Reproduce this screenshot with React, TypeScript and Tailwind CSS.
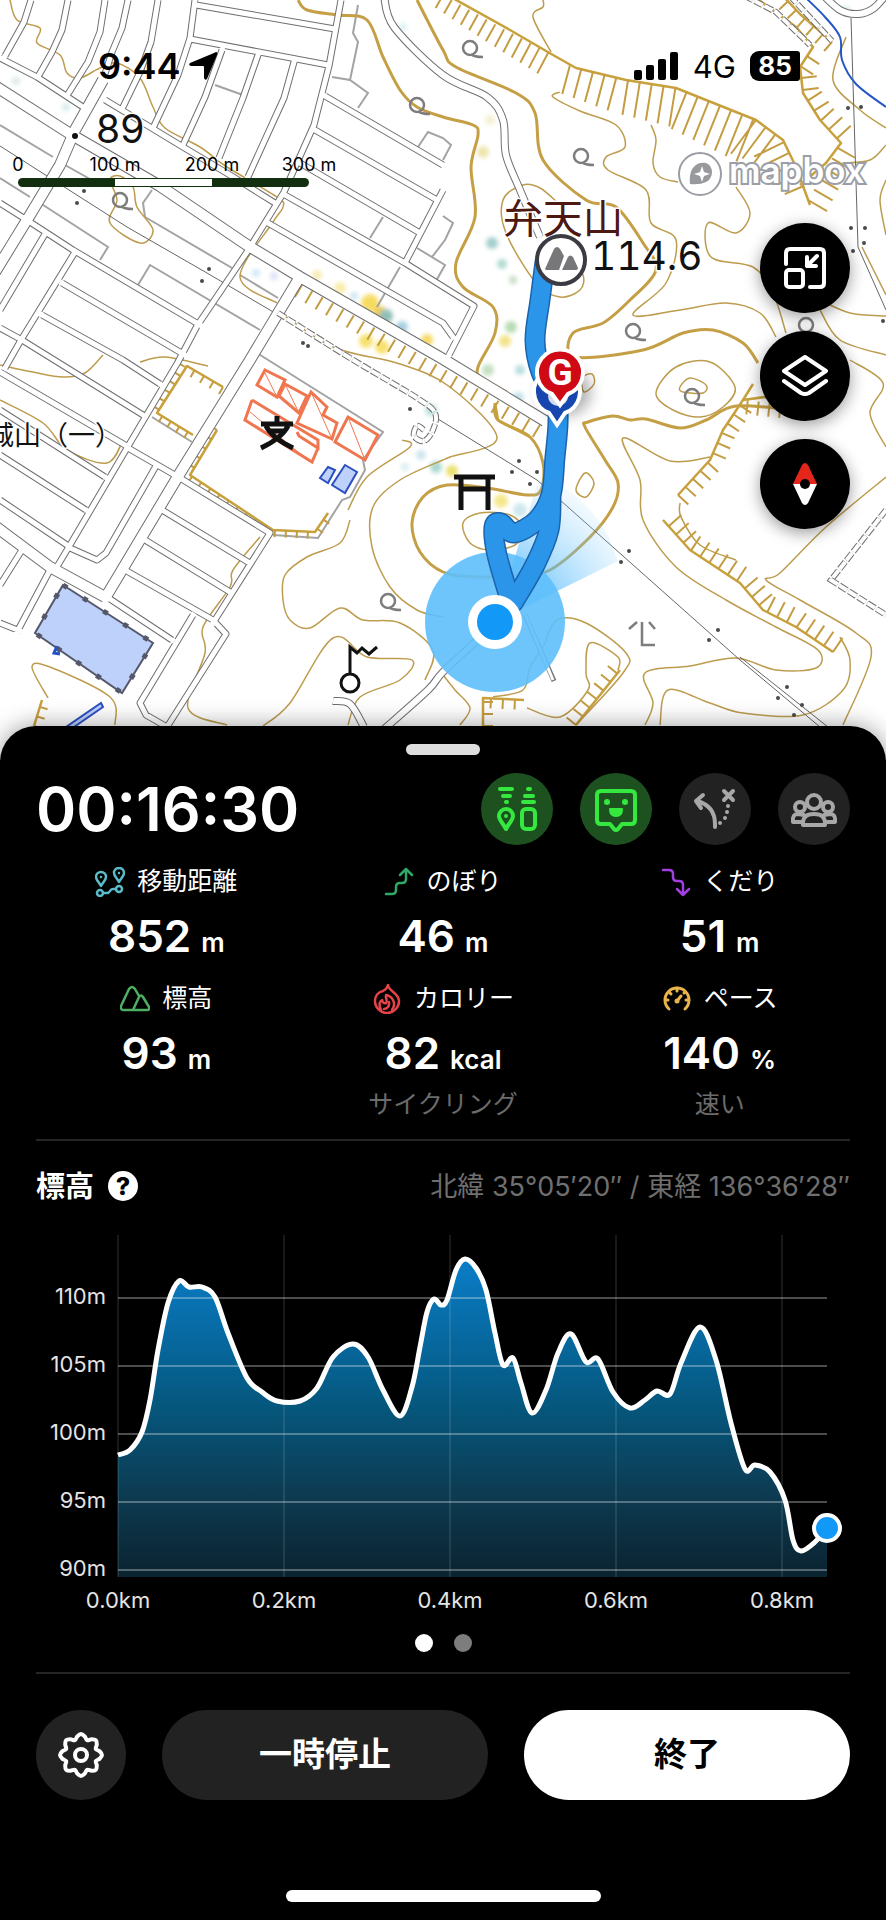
import type { ReactNode } from 'react';

type Point = [number, number];

function parse(points: string): Point[] {
  return points.split(' ').map((p) => p.split(',').map(Number) as Point);
}

// Catmull-Rom spline through the given points
function curve(points: string, closed = false) {
  const pts = parse(points);
  const n = pts.length;
  const at = (i: number) =>
    closed ? pts[(i + n) % n] : pts[Math.max(0, Math.min(n - 1, i))];
  let d = `M${pts[0][0]} ${pts[0][1]}`;
  for (let i = 0; i < (closed ? n : n - 1); i++) {
    const [p0, p1, p2, p3] = [at(i - 1), at(i), at(i + 1), at(i + 2)];
    d += `C${p1[0] + (p2[0] - p0[0]) / 6} ${p1[1] + (p2[1] - p0[1]) / 6} ${
      p2[0] - (p3[0] - p1[0]) / 6
    } ${p2[1] - (p3[1] - p1[1]) / 6} ${p2[0]} ${p2[1]}`;
  }
  return d;
}

// Cliff hachures: short strokes at right angles to the line
function ticks(points: string, length: number, gap = 10, endLength = length) {
  const pts = parse(points);
  const total = pts
    .slice(1)
    .reduce((s, p, i) => s + Math.hypot(p[0] - pts[i][0], p[1] - pts[i][1]), 0);
  let d = '';
  let walked = 0;
  let next = 0;
  for (let i = 0; i < pts.length - 1; i++) {
    const [x1, y1] = pts[i];
    const [x2, y2] = pts[i + 1];
    const seg = Math.hypot(x2 - x1, y2 - y1);
    const dx = (x2 - x1) / seg;
    const dy = (y2 - y1) / seg;
    while (next <= walked + seg) {
      const t = next - walked;
      const l = length + ((endLength - length) * next) / total;
      d += `M${x1 + dx * t} ${y1 + dy * t}l${-dy * l} ${dx * l}`;
      next += gap;
    }
    walked += seg;
  }
  return d;
}

const line = (points: string) => 'M' + points.replaceAll(' ', 'L');

const narrowRoads = [
  '31,0 24,22 5,56',
  '68,0 62,30 52,52 39,75',
  '105,0 100,32 88,62 68,94',
  '128,0 122,28 112,52 103,80',
  '158,0 151,42 140,72 123,107',
  '195,0 190,38 178,75 154,126',
  '222,50 205,97 183,145',
  '258,55 243,98 219,158',
  '294,62 284,98 248,177',
  '341,0 329,66 314,125 284,192 247,252 197,326 178,362 127,448 70,545 58,565',
  '196,5 335,29',
  '190,39 328,65',
  '0,58 37,77 83,107',
  '105,100 150,127 183,147 230,175 275,203',
  '0,203 30,222 73,250 200,325',
  '62,283 185,355',
  '42,315 123,360 160,384',
  '75,252 21,340 5,368',
  '45,234 0,310',
  '0,328 22,340 143,415',
  '0,372 125,445',
  '0,410 105,477',
  '0,455 86,510',
  '0,500 67,545',
  '50,570 17,632',
  '22,550 0,585',
  '0,623 20,631',
  '107,597 172,640',
  '128,448 180,478 270,533 213,623',
  '162,510 248,562',
  '145,540 230,592',
  '125,570 213,620 226,634 167,727 146,715 140,703 193,615',
  '156,466 106,553 97,560 70,548',
  '325,96 443,165',
  '315,130 437,200',
  '300,163 420,233',
  '285,195 405,263 474,306 449,355',
  '268,223 443,323 453,337',
  '443,190 405,263',
];

const wideRoads = [
  '103,80 75,130 60,165 30,215 -5,272',
  '-5,86 72,135 160,186 247,245 300,277 443,359 545,421',
  '298,280 250,360 180,473 107,595',
  '-5,526 50,567 105,597',
];

const curvedRoads = [
  '384,-4 394,27 443,75 487,97 503,120 506,155 520,190 540,237',
  '482,636 443,672 428,690 383,730',
  '333,701 350,704 364,727',
  '820,-8 840,10 858,14 874,8 890,-10',
];

const greyLines = [
  '0,125 53,157',
  '65,165 97,183',
  '0,178 30,197',
  '40,203 108,247 100,260',
  '138,285 150,265 260,330',
  '152,190 143,203 145,217 232,268',
  '358,5 353,33 358,42 350,80',
  '332,77 350,80 368,93 358,108',
  '418,147 428,132 443,138 451,145 443,160',
  '215,85 243,95',
  '383,217 370,238',
  '400,267 377,307',
  '417,248 445,265 436,281',
  '443,216 453,223 445,240 432,257',
  '240,275 278,298',
  '257,353 383,432 363,460 365,470 350,497 342,500 318,538 273,535',
  '152,417 192,442',
];

const thickContours = [
  '298,0 307,10 337,15 367,20 383,57 400,90 417,107 443,117 473,125 478,135 471,167 475,217 456,263 463,287 493,307 495,333 478,367 482,378 507,392',
  '495,403 498,420 530,437 543,463 541,490 527,495 487,488 447,485 423,497 412,523 420,552 443,572 476,577 520,575 550,570 590,537 613,507 618,483 605,460 585,427 588,422 613,416 630,420 646,419 680,428 706,420 736,406 793,410',
  '417,0 443,50 456,67 516,93 535,113 543,160 586,200 616,207 643,243 656,270 630,300 603,323 573,333 575,357 643,350 683,333 713,330 743,343 758,363',
];

const thinContours = [
  '543,0 543,7 533,17 551,52',
  '560,92 553,97 580,111 616,125 625,147 606,157 608,170 646,190 651,223 676,240 666,283 633,315 680,310 726,303 760,313 776,337',
  '651,125 656,140 653,163 660,177 678,182',
  '736,187 750,213 736,233 708,223 711,257 753,267 773,293 786,333',
  '558,203 540,188 523,185 503,200 506,233 536,283 560,297 580,290 583,275 570,262',
  '645,725 653,703 645,673 690,666 736,658 776,670 816,668 818,650 776,627 726,600 676,567 643,520 640,480 623,438 670,461 710,457',
  '660,725 668,690 710,703 743,713 803,715 843,690 850,660 840,637',
  '886,477 826,527 780,573 766,580 800,600 856,633 871,657 843,725',
  '850,360 883,383 870,413 886,447',
  '680,503 681,517 700,545 736,560',
  '820,300 850,313 886,316',
  '820,310 840,340 886,355',
  '843,163 870,160 886,145',
  '576,725 623,673 626,653 586,623 557,620 543,647 530,667 523,690 493,697',
  '618,670 618,657 590,643 586,673 588,690 560,717 527,708',
  '443,460 400,480 373,507 372,547 390,587 417,610 443,617',
  '277,310 333,347 400,364 450,387 497,438 450,457 443,460',
  '402,440 410,447 367,477 348,510',
  '350,520 340,543 307,557 285,575 283,600 290,620 310,628 340,608 363,620 400,623 433,650 425,680',
  '263,726 290,703 333,638 367,657 412,660 400,680 360,697 348,725',
  '48,698 32,667 50,667 110,697 115,725',
  '0,400 43,423 67,450 107,463 123,440',
  '260,537 233,570 230,587 203,627 205,653 188,708 227,725',
  '0,365 33,372 63,377 85,373 103,355',
  '140,362 165,357 208,366',
  '10,0 17,20 40,28 37,43 60,55 67,73 80,78 100,68 117,63 140,78 153,107 165,128 200,147 227,167 277,197 283,207 273,222 240,277 277,303',
  '443,675 455,690 470,708 460,725',
  '846,37 833,80 860,110 886,128',
  '862,247 886,295',
  '886,180 880,200 886,235',
];

const rings = [
  '656,393 676,367 710,362 735,387 723,407 700,417 673,410',
  '680,387 690,378 706,385 703,393 683,392',
  '585,473 594,483 586,497 576,490',
  '110,180 117,200 110,223 140,243 153,230 137,207 133,187 120,176',
  '463,523 480,513 510,515 525,530 515,545 490,550 470,543',
  '582,378 592,374 594,384 584,392',
];

const cliffEdges = [
  '449,-4 510,30 553,55 576,68 626,80 676,88 756,120 783,140 796,167 810,205',
  '756,-2 796,27 813,47 800,67 803,93 820,120 841,143 826,163 800,185',
  '783,-4 800,14 832,42',
  '753,384 743,400 723,430 710,460 678,495',
  '743,400 765,397 790,405',
  '663,520 690,550 740,583 763,610 796,627 833,652',
  '620,670 576,725',
  '223,387 187,366 157,413 193,435',
  '217,430 190,475 273,530 315,532 328,513',
  '524,700 483,698 483,726',
  '495,403 498,420 530,437',
  '42,700 34,726',
];

const hachures = [
  ticks('443,-5 500,27 553,55', 15, 10, 24),
  ticks('570,65 626,80 676,88 756,120', 30, 12, 46),
  ticks('756,120 783,140 796,167 806,190', 42, 12, 20),
  ticks('808,200 841,143 820,120 803,93 800,67 813,47', 22, 12, 14),
  ticks('832,42 800,14 783,-4', -12, 12),
  ticks('678,495 710,460 723,430 743,400 790,405', 14, 11),
  ticks('833,652 796,627 763,610 740,583 690,550 663,520', 17, 11),
  ticks('576,725 620,670', -12, 11),
  ticks('223,387 187,366', -8, 11),
  ticks('185,367 157,413 193,435', 7, 10),
  ticks('217,430 190,475 273,530 315,532 328,513', 7, 11),
  ticks('302,285 545,428', 14, 12),
  ticks('483,726 483,698 524,700', 10, 12),
  ticks('34,726 42,700', 8, 10),
];

const shrubs: Point[] = [
  [417, 105],
  [120, 200],
  [470, 48],
  [581, 156],
  [633, 331],
  [806, 325],
  [692, 396],
  [388, 601],
];

const pylons: Point[] = [
  [84, 191], [77, 203], [209, 269], [202, 281], [303, 343], [308, 346],
  [519, 461], [512, 472], [537, 472], [530, 484], [629, 551], [621, 562],
  [718, 630], [709, 640], [787, 687], [778, 698], [802, 705], [794, 715],
  [851, 228], [865, 228], [864, 243], [853, 251], [883, 321], [848, 108],
  [861, 107], [410, 409],
];

// x, y, radius, colour of the heat spots of other walkers
const spots: [number, number, number, string][] = [
  [370, 303, 9, '#f5d33c'],
  [380, 313, 7, '#e8c030'],
  [386, 316, 7, '#76b0a6'],
  [402, 327, 6, '#8fc4dc'],
  [366, 341, 7, '#f5d94a'],
  [382, 347, 7, '#f5d94a'],
  [427, 340, 6, '#f3cf40'],
  [340, 288, 6, '#f8e89a'],
  [317, 275, 5, '#f3e7a0'],
  [354, 296, 4, '#bfe0ee'],
  [256, 273, 4, '#c4e2f4'],
  [274, 276, 4, '#d4d8f4'],
  [16, 81, 4, '#d3e6e3'],
  [66, 107, 4, '#cfe5ea'],
  [492, 243, 6, '#8dc3c0'],
  [502, 264, 5, '#9fd0c4'],
  [513, 280, 4, '#b9d6b4'],
  [511, 327, 6, '#a5d2a0'],
  [505, 341, 6, '#f0dc6a'],
  [483, 152, 6, '#ecdf9a'],
  [490, 120, 5, '#f2edc6'],
  [488, 370, 6, '#b5d8b0'],
  [520, 370, 5, '#a8d4d8'],
  [518, 398, 6, '#b2dbe4'],
  [436, 467, 6, '#94cdc2'],
  [421, 455, 5, '#c2dfe8'],
  [405, 467, 4, '#d2e8ee'],
  [452, 471, 6, '#e6d84c'],
  [501, 501, 7, '#f2e270'],
  [520, 510, 7, '#c3e3ea'],
  [431, 410, 6, '#a9d8d6'],
  [846, 10, 4, '#cdeaf2'],
  [403, 27, 4, '#d5ecf2'],
];

const route =
  curve('545,262 540,300 535,340 541,372 556,400 558,423 555,457 551,495 537,520 514,533 501,523 494,527 497,555 511,603') +
  curve('551,495 549,530 535,565 513,603');

const dashedRoads =
  curve('278,313 350,358 417,398 435,413 433,430 424,441 414,436 417,426 424,430') +
  'M886 510L831 580L886 615M745 -4L776 12L810 45M790 -4L832 41';

const sans = "Inter, 'Noto Sans CJK JP', sans-serif";

function GsiMap() {
  return (
    <svg
      viewBox="0 0 886 760"
      preserveAspectRatio="xMidYMin slice"
      className="block h-[760px] w-full bg-white"
      fill="none"
      role="img"
      aria-label="地図"
    >
      <defs>
        <filter id="soft">
          <feGaussianBlur stdDeviation="2" />
        </filter>
        <filter id="shadow" x="-50%" y="-50%" width="200%" height="200%">
          <feGaussianBlur stdDeviation="7" />
        </filter>
        <radialGradient id="cone" gradientUnits="userSpaceOnUse" cx="495" cy="622" r="150">
          <stop offset="0.3" stopColor="#45b4fb" stopOpacity="0.75" />
          <stop offset="1" stopColor="#8bd0fb" stopOpacity="0.1" />
        </radialGradient>
      </defs>

      <g filter="url(#soft)" opacity="0.8">
        {spots.map(([x, y, r, fill]) => (
          <circle key={`${x}-${y}`} cx={x} cy={y} r={r} fill={fill} />
        ))}
      </g>

      <path d={greyLines.map(line).join('')} stroke="#a3a3a3" strokeWidth="2" />
      <path d={thinContours.map((c) => curve(c)).join('')} stroke="#bd9c4e" strokeWidth="1.5" />
      <path d={rings.map((c) => curve(c, true)).join('')} stroke="#bd9c4e" strokeWidth="1.5" />
      <path d={thickContours.map((c) => curve(c)).join('')} stroke="#c59f45" strokeWidth="3" />
      <path d={cliffEdges.map(line).join('')} stroke="#c8a03c" strokeWidth="2.5" strokeLinejoin="round" />
      <path d={hachures.join('')} stroke="#c49c42" strokeWidth="2" />

      <path
        d="M0 146L127 227L207 273L275 313M438 419L537 480L560 500L740 660L820 727M740 657L828 727M851 18L858 247L886 310"
        stroke="#666"
        strokeWidth="1"
      />

      {/* roads: casing first, then the white fill */}
      <g strokeLinejoin="round">
        <path d={narrowRoads.map(line).join('')} stroke="#6f6f6f" strokeWidth="7" />
        <path d={curvedRoads.map((c) => curve(c)).join('')} stroke="#6f6f6f" strokeWidth="8" />
        <path d={wideRoads.map(line).join('')} stroke="#6f6f6f" strokeWidth="12" />
        <path d={narrowRoads.map(line).join('')} stroke="#fff" strokeWidth="5" strokeLinecap="square" />
        <path d={curvedRoads.map((c) => curve(c)).join('')} stroke="#fff" strokeWidth="6" />
        <path d={wideRoads.map(line).join('')} stroke="#fff" strokeWidth="10" strokeLinecap="square" />
        <path d="M525 615L554 681" stroke="#777" strokeWidth="5" />
        <path d="M525 614L553 680" stroke="#fff" strokeWidth="3" />
      </g>
      <g strokeDasharray="9 2">
        <path d={dashedRoads} stroke="#6f6f6f" strokeWidth="6" />
        <path d={dashedRoads} stroke="#fff" strokeWidth="4" />
      </g>

      <path d={curve('806,-2 825,17 840,37 842,60 856,84 886,107')} stroke="#2456c8" strokeWidth="2" />

      {/* school and pool */}
      <g stroke="#f0764f" strokeWidth="3">
        <path d="M265 370L285 380L277 397L257 385ZM285 384L307 396L299 413L279 396ZM311 392L327 407L323 415L337 423L332 439L297 423ZM348 417L378 435L365 460L335 442ZM252 400L318 440L318 448L299 436L297 432M252 400L245 420L312 462L318 448" />
        <path d="M265 373L277 397M250 412L310 462M348 417L365 460M311 392L332 439M285 384L299 413" strokeWidth="1" />
      </g>
      <g fill="#bdd1fb" stroke="#2c50c4" strokeWidth="2">
        <path d="M328 467L335 470L328 483L320 478ZM345 465L357 472L345 493L332 485ZM101 703L103 707L74 727H66Z" />
        <path d="M63 585L153 643L122 693L35 633Z" stroke="#55586a" />
      </g>
      <path d="M63 585L153 643L122 693L35 633Z" stroke="#55586a" strokeWidth="5" strokeDasharray="5 19" />
      <path d="M57 646L54 653L60 654" stroke="#2450c8" strokeWidth="3" />

      {/* map symbols */}
      <g stroke="#111" strokeWidth="5">
        <path d="M277 416V424M261 424H293M266 426Q272 438 293 448M288 426Q282 438 261 448M268 431H286" />
        <path d="M454 477H495M461 478V510M488 478V510M461 489H488" />
        <circle cx="350" cy="683" r="9" strokeWidth="3" />
        <path d="M350 674V647L357 653L362 648L369 654L377 647" strokeWidth="3" />
      </g>
      <g stroke="#7d7d7d" strokeWidth="2.5">
        <path d="M629 629L637 622M649 622L655 629M642 622V645H655" />
        {shrubs.map(([x, y]) => (
          <path
            key={`${x}-${y}`}
            d={`M${x - 7} ${y}a7 7 0 1 0 14 0a7 7 0 1 0 -14 0M${x + 1} ${y + 6}Q${x + 4} ${y + 9} ${x + 13} ${y + 9}`}
          />
        ))}
      </g>
      {pylons.map(([x, y]) => (
        <circle key={`${x}-${y}`} cx={x} cy={y} r="2" fill="#4a4a4a" />
      ))}

      {/* walked route and current position */}
      <path d="M495 622L540 475Q600 500 618 561Z" fill="url(#cone)" />
      <circle cx="495" cy="622" r="70" fill="#5ebffb" opacity="0.9" />
      <path d={route} stroke="#1c63ab" strokeWidth="21" strokeLinejoin="round" strokeLinecap="round" />
      <path d={route} stroke="#2b95ea" strokeWidth="18" strokeLinejoin="round" strokeLinecap="round" />
      <circle cx="495" cy="622" r="27" fill="#fff" />
      <circle cx="495" cy="622" r="18" fill="#1299f7" />

      {/* start and goal pins */}
      <ellipse cx="565" cy="392" rx="26" ry="24" fill="#000" opacity="0.3" filter="url(#shadow)" />
      <path d="M557 425L549 413A23 23 0 1 1 565 413Z" fill="#1747ae" stroke="#fff" strokeWidth="4" />
      <circle cx="558" cy="396" r="10" fill="#d5dcee" />
      <path d="M560 405L552 394A23 23 0 1 1 568 394Z" fill="#cf0a15" stroke="#fff" strokeWidth="4" />
      <text x="560" y="385" textAnchor="middle" fill="#fff" fontFamily="Roboto, sans-serif" fontSize="37" fontWeight="700">
        G
      </text>

      {/* summit */}
      <g stroke="#fff" strokeWidth="3" paintOrder="stroke" fontFamily={sans}>
        <text x="503" y="233" fill="#4d1712" fontSize="40">
          弁天山
        </text>
        <text x="591" y="270" fill="#111" fontSize="39" className="tabular-nums">
          114.6
        </text>
        <text x="96" y="143" fill="#111" fontSize="39">
          89
        </text>
        <text x="-13" y="445" fill="#111" fontSize="27">
          城山（一）
        </text>
      </g>
      <circle cx="75" cy="136" r="3" fill="#111" />
      <circle cx="561" cy="260" r="24" fill="#fff" stroke="#3b3b43" strokeWidth="4" />
      <path
        d="M545 269L554 249Q557 245 560 249L564 256L559 270H546ZM562 270L568 257Q570 254 573 257L578 268Q578 270 576 270Z"
        fill="#77777a"
      />

      {/* map provider mark */}
      <circle cx="700" cy="174" r="21" fill="#fff" fillOpacity="0.8" stroke="#9a9da3" strokeWidth="2" />
      <path d="M690 184C688 168 697 161 706 163C714 166 714 178 706 182Q700 185 690 184Z" fill="#97999c" />
      <path d="M702 166L704 172L710 174L704 176L702 182L700 176L694 174L700 172Z" fill="#fff" />
      <text x="729" y="183" fill="#fff" stroke="#9b9ea6" strokeWidth="4" paintOrder="stroke" fontFamily={sans} fontSize="35" fontWeight="600">
        mapbox
      </text>
    </svg>
  );
}

function StatusBar() {
  return (
    <div className="absolute inset-x-0 top-11 flex h-11 items-center justify-between pl-[98px] pr-[86px] text-black">
      <div className="flex items-center gap-2">
        <span className="text-[36px] font-semibold leading-none">9:44</span>
        <svg viewBox="0 0 30 30" className="size-[30px]">
          <path d="M28 1Q30 1 29 4L19 28Q17 30 16 27V16Q16 15 15 15H3Q0 14 2 12L26 2Z" fill="#000" />
        </svg>
      </div>
      <div className="flex items-center gap-3.5">
        <svg viewBox="0 0 45 28" className="h-7 w-[45px]">
          <rect x="0" y="18" width="8" height="10" rx="2" />
          <rect x="12" y="13" width="8" height="15" rx="2" />
          <rect x="24" y="7" width="8" height="21" rx="2" />
          <rect x="36" y="0" width="8" height="28" rx="2" />
        </svg>
        <span className="text-[31px] leading-none">4G</span>
        <span className="flex h-[30px] w-[50px] items-center justify-center rounded-l-[9px] rounded-r-[3px] bg-black text-[26px] font-bold leading-none text-white">
          85
        </span>
      </div>
    </div>
  );
}

function ScaleBar() {
  return (
    <div className="absolute left-[18px] top-[155px] w-[291px] text-[18px] leading-5 text-black">
      <div className="flex justify-between">
        {['0', '100 m', '200 m', '300 m'].map((label) => (
          <span key={label} className="flex w-0 justify-center whitespace-nowrap">
            {label}
          </span>
        ))}
      </div>
      <div className="mt-[3px] flex h-[9px] overflow-hidden rounded-full bg-[#12300f]">
        <div className="mx-auto w-[97px] border-y border-[#12300f] bg-white" />
      </div>
    </div>
  );
}

function MapButton({ label, children }: { label: string; children: ReactNode }) {
  return (
    <button
      type="button"
      aria-label={label}
      className="flex size-[90px] items-center justify-center rounded-full bg-black text-white shadow-[0_4px_16px_rgba(0,0,0,0.4)]"
    >
      {children}
    </button>
  );
}

function MapControls() {
  return (
    <div className="absolute right-9 top-[223px] flex flex-col gap-[18px]">
      <MapButton label="地図を縮小">
        <svg viewBox="0 0 42 42" className="size-[42px]" fill="none" stroke="currentColor" strokeWidth="4" strokeLinecap="round" strokeLinejoin="round">
          <path d="M2 17V6Q2 2 6 2H36Q40 2 40 6V36Q40 40 36 40H26" />
          <rect x="2" y="23" width="17" height="17" rx="3" />
          <path d="M33 9L23 19M23 10V19H32" />
        </svg>
      </MapButton>
      <MapButton label="地図レイヤー">
        <svg viewBox="0 0 46 42" className="h-[42px] w-[46px]" fill="none" stroke="currentColor" strokeWidth="4" strokeLinecap="round" strokeLinejoin="round">
          <path d="M23 2L44 16L23 30L2 16Z" />
          <path d="M2 26L19 38Q23 40 27 38L44 26" />
        </svg>
      </MapButton>
      <MapButton label="コンパス">
        <svg viewBox="0 0 24 42" className="h-[42px] w-6">
          <path d="M0 21L9 2Q12 -2 15 2L24 21Z" fill="#e5261b" />
          <path d="M0 21L9 40Q12 44 15 40L24 21Z" fill="#fff" />
          <circle cx="12" cy="21" r="5" fill="#000" />
        </svg>
      </MapButton>
    </div>
  );
}

const shortcuts = [
  {
    label: '現在地の共有',
    active: true,
    icon: (
      <>
        <path d="M19 16H31M22 23H29M25 29H26M47 16H49M44 23H52M42 29H53" />
        <path d="M25 56C22 50 18 47 18 43A7 7 0 0 1 32 43C32 47 28 50 25 56Z" />
        <circle cx="25" cy="43" r="2" fill="currentColor" stroke="none" />
        <rect x="41" y="36" width="13" height="20" rx="4" />
      </>
    ),
  },
  {
    label: 'みまもり',
    active: true,
    icon: (
      <>
        <path d="M21 18H51Q55 18 55 22V47Q55 51 51 51H42L38 56Q36 58 34 56L30 51H21Q17 51 17 47V22Q17 18 21 18Z" />
        <circle cx="27" cy="29" r="3" fill="currentColor" stroke="none" />
        <circle cx="45" cy="29" r="3" fill="currentColor" stroke="none" />
        <path d="M30 36H42Q42 43 36 43T30 36Z" fill="currentColor" strokeWidth="2" />
      </>
    ),
  },
  {
    label: 'ルート外れ警告',
    active: false,
    icon: (
      <>
        <path d="M36 54V51Q36 33 18 28M24 22L17 28L22 35M45 18L54 27M54 18L45 27" />
        <path d="M49 33V33M48 39V39M46 45V45M41 50V50" />
      </>
    ),
  },
  {
    label: '仲間',
    active: false,
    icon: (
      <>
        <circle cx="36" cy="29" r="7" />
        <circle cx="22" cy="34" r="5" />
        <circle cx="50" cy="34" r="5" />
        <path d="M25 52Q24 41 36 41T47 52Z" />
        <path d="M24 49H15Q14 41 20 41L26 42M48 49H57Q58 41 52 41L46 42" />
      </>
    ),
  },
];

const stats = [
  {
    label: '移動距離',
    value: '852',
    unit: 'm',
    icon: (
      <g stroke="#5bbcc9">
        <path d="M6 19C4 15 1 13 1 10A5 5 0 0 1 11 10C11 13 8 15 6 19ZM24 15C22 11 19 9 19 6A5 5 0 0 1 29 6C29 9 26 11 24 15Z" />
        <path d="M6 10V10M24 6V6" />
        <circle cx="5" cy="26" r="3" />
        <circle cx="24" cy="22" r="3" />
        <path d="M8 26H12Q14 26 15 24T18 22H21" />
      </g>
    ),
  },
  {
    label: 'のぼり',
    value: '46',
    unit: 'm',
    icon: (
      <path d="M2 27H8Q12 27 12 23V20Q12 16 16 16H18Q22 16 22 12V2M16 8L22 2L28 8" stroke="#2fa866" />
    ),
  },
  {
    label: 'くだり',
    value: '51',
    unit: 'm',
    icon: (
      <path d="M2 3H8Q12 3 12 7V10Q12 14 16 14H18Q22 14 22 18V28M16 22L22 28L28 22" stroke="#a23fe0" />
    ),
  },
  {
    label: '標高',
    value: '93',
    unit: 'm',
    icon: (
      <path
        d="M13 26H4Q0 26 1 22L9 5Q12 1 15 5L19 12M13 26L19 13Q21 10 23 13L29 23Q30 26 27 26Z"
        stroke="#4eae62"
      />
    ),
  },
  {
    label: 'カロリー',
    value: '82',
    unit: 'kcal',
    note: 'サイクリング',
    icon: (
      <g stroke="#e8434a">
        <path d="M16 1C16 7 27 9 27 17A12 12 0 0 1 3 17C3 12 6 8 11 7Q15 5 16 1Z" />
        <path d="M9 26C6 21 8 17 10 16Q11 20 14 19C16 17 13 13 14 11C20 12 25 19 20 26M12 25Q18 24 17 18" />
      </g>
    ),
  },
  {
    label: 'ペース',
    value: '140',
    unit: '%',
    note: '速い',
    icon: (
      <g stroke="#e9b44c" strokeWidth="3">
        <path d="M7 25A12 12 0 1 1 23 25" />
        <path d="M4 16H6M24 16H26M15 4V7M7 8L9 10M23 8L22 9M15 17L19 12" />
        <circle cx="15" cy="17" r="1" />
      </g>
    ),
  },
];

function Stat({ label, value, unit, note, icon }: (typeof stats)[number]) {
  return (
    <div className="flex flex-col items-center">
      <dt className="flex h-9 items-center gap-3 text-[25px]">
        <svg viewBox="0 0 30 30" className="size-[30px]" fill="none" strokeWidth="2.5" strokeLinecap="round" strokeLinejoin="round">
          {icon}
        </svg>
        {label}
      </dt>
      <dd className="mt-1 flex h-16 items-center">
        <span className="flex items-baseline gap-2.5 leading-none">
          <span className="text-[44px] font-semibold leading-none">{value}</span>
          <span className="text-[26px] font-semibold leading-none">{unit}</span>
        </span>
      </dd>
      {note && <dd className="flex h-10 items-center text-[25px] text-[#6b6b6b]">{note}</dd>}
    </div>
  );
}

const profile = curve(
  '82,225 94,220 106,202 114,170 122,120 132,73 143,51 153,57 166,57 179,67 192,103 211,148 226,162 241,171 264,171 281,158 297,127 317,114 332,127 347,160 364,186 376,157 384,117 391,82 398,69 405,75 411,70 420,40 429,29 440,38 450,60 459,103 467,135 477,128 485,153 496,183 510,160 522,123 535,104 550,132 562,129 577,162 594,178 609,170 621,161 634,164 645,133 664,97 680,130 695,193 709,239 719,235 734,242 749,270 757,310 765,321 779,312 791,298'
);

function ElevationChart() {
  return (
    <svg viewBox="0 0 814 390" className="mt-6 block h-auto w-full" role="img" aria-label="標高グラフ" fontFamily={sans} fontSize="22">
      <defs>
        <linearGradient id="fill" gradientUnits="userSpaceOnUse" x1="0" y1="29" x2="0" y2="347">
          <stop offset="0" stopColor="#0a7dc8" />
          <stop offset="0.45" stopColor="#05587f" />
          <stop offset="0.75" stopColor="#0d3a50" />
          <stop offset="1" stopColor="#0a2330" />
        </linearGradient>
      </defs>
      <path d={`${profile}V347H82Z`} fill="url(#fill)" />
      {['110m', '105m', '100m', '95m', '90m'].map((label, i) => (
        <g key={label}>
          <path d={`M82 ${68 + i * 68}H791`} stroke="#fff" strokeOpacity="0.6" />
          <text x="70" y={74 + i * 68} textAnchor="end" fill="#e4e4e4">
            {label}
          </text>
        </g>
      ))}
      {['0.0km', '0.2km', '0.4km', '0.6km', '0.8km'].map((label, i) => (
        <g key={label}>
          <path d={`M${82 + i * 166} 5V347`} stroke="#fff" strokeOpacity="0.2" />
          <text x={82 + i * 166} y="378" textAnchor="middle" fill="#e4e4e4">
            {label}
          </text>
        </g>
      ))}
      <path d={profile} fill="none" stroke="#fff" strokeWidth="5" strokeLinejoin="round" />
      <circle cx="791" cy="298" r="13" fill="#1299f7" stroke="#fff" strokeWidth="4" />
    </svg>
  );
}

// Eight-lobed cog outline
const cog = curve(
  Array.from({ length: 32 }, (_, i) => {
    const angle = (i * Math.PI) / 16;
    const r = [21, 19, 16, 19][i % 4];
    return `${24 + r * Math.sin(angle)},${24 - r * Math.cos(angle)}`;
  }).join(' '),
  true
);

export default function App() {
  return (
    <main className="min-h-screen bg-black font-[Inter,'Noto_Sans_CJK_JP',sans-serif] text-white">
      <section className="relative">
        <GsiMap />
        <StatusBar />
        <ScaleBar />
        <MapControls />
      </section>

      <section className="relative -mt-[34px] rounded-t-[36px] bg-black px-9 pb-[18px] pt-[18px] shadow-[0_0_24px_rgba(0,0,0,0.4)]">
        <div className="mx-auto h-[11px] w-[74px] rounded-full bg-[#dedede]" />

        <header className="mt-[18px] flex h-[72px] items-center justify-between">
          <h1 className="text-[61px] font-semibold leading-none">00:16:30</h1>
          <div className="flex gap-[27px]">
            {shortcuts.map(({ label, active, icon }) => (
              <button
                key={label}
                type="button"
                aria-label={label}
                className={
                  active
                    ? 'size-[72px] rounded-full bg-[#1d5220] text-[#35e83f]'
                    : 'size-[72px] rounded-full bg-[#222] text-[#a8a8a8]'
                }
              >
                <svg viewBox="0 0 72 72" fill="none" stroke="currentColor" strokeWidth="4" strokeLinecap="round" strokeLinejoin="round">
                  {icon}
                </svg>
              </button>
            ))}
          </div>
        </header>

        <dl className="-mx-2 mt-[19px] grid grid-cols-3 gap-y-[13px]">
          {stats.map((stat) => (
            <Stat key={stat.label} {...stat} />
          ))}
        </dl>

        <div className="mt-3.5 h-0.5 bg-[#262626]" />

        <div className="mt-[25px] flex h-10 items-center justify-between">
          <div className="flex items-center gap-3.5">
            <h2 className="text-[29px] font-bold leading-none">標高</h2>
            <button
              type="button"
              aria-label="標高について"
              className="flex size-[30px] items-center justify-center rounded-full bg-white text-[25px] font-extrabold leading-none text-black"
            >
              ?
            </button>
          </div>
          <p className="text-[27px] leading-none text-[#6f6f6f]">北緯 35°05′20″ / 東経 136°36′28″</p>
        </div>

        <ElevationChart />

        <div className="mt-3.5 flex justify-center gap-[21px]">
          <span className="size-[18px] rounded-full bg-white" />
          <span className="size-[18px] rounded-full bg-[#7d7d7d]" />
        </div>

        <div className="mt-5 h-0.5 bg-[#262626]" />

        <div className="mt-9 flex h-[90px] gap-9">
          <button type="button" aria-label="設定" className="flex w-[90px] items-center justify-center rounded-full bg-[#222]">
            <svg viewBox="0 0 48 48" className="size-12" fill="none" stroke="currentColor" strokeWidth="4">
              <path d={cog} />
              <circle cx="24" cy="24" r="6" />
            </svg>
          </button>
          <button type="button" className="flex-1 rounded-full bg-[#222] text-[33px] font-bold">
            一時停止
          </button>
          <button type="button" className="flex-1 rounded-full bg-white text-[33px] font-bold text-black">
            終了
          </button>
        </div>

        <div className="mx-auto mt-[90px] h-3 w-[315px] rounded-full bg-white" />
      </section>
    </main>
  );
}
